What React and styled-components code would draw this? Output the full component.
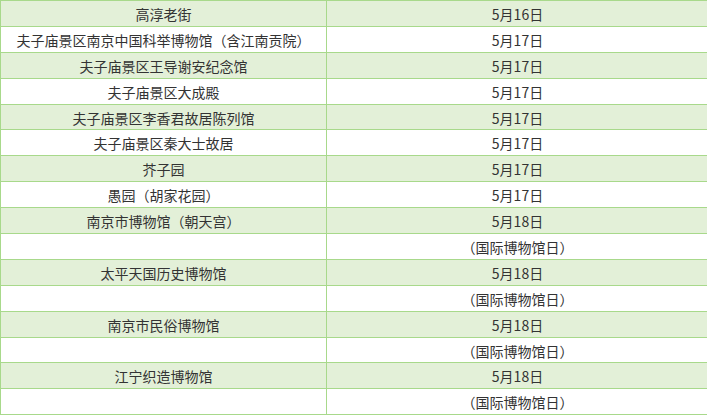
import React from "react";
import styled, { createGlobalStyle } from "styled-components";

const GlobalStyle = createGlobalStyle`
  html, body {
    margin: 0;
    padding: 0;
    background: #ffffff;
    overflow: hidden;
  }
  body {
    font-family: "Noto Sans CJK SC", "Noto Sans", sans-serif;
  }
`;

const Table = styled.div`
  width: 708px;
  display: grid;
  grid-template-columns: 326px 382px;
  grid-auto-rows: 25.9px;
  border-top: 1px solid #a8d98b;
  border-left: 1px solid #a8d98b;
  box-sizing: border-box;
`;

const Cell = styled.div`
  display: flex;
  align-items: center;
  justify-content: center;
  box-sizing: border-box;
  border-right: 1px solid #a8d98b;
  border-bottom: 1px solid #a8d98b;
  background: ${(p) => (p.$shaded ? "#e3f0d8" : "#ffffff")};
  color: #333333;
  font-size: 14px;
  line-height: 1;
  white-space: nowrap;
  padding-top: 1px;
`;

const rows = [
  ["高淳老街", "5月16日"],
  ["夫子庙景区南京中国科举博物馆（含江南贡院）", "5月17日"],
  ["夫子庙景区王导谢安纪念馆", "5月17日"],
  ["夫子庙景区大成殿", "5月17日"],
  ["夫子庙景区李香君故居陈列馆", "5月17日"],
  ["夫子庙景区秦大士故居", "5月17日"],
  ["芥子园", "5月17日"],
  ["愚园（胡家花园）", "5月17日"],
  ["南京市博物馆（朝天宫）", "5月18日"],
  ["", "（国际博物馆日）"],
  ["太平天国历史博物馆", "5月18日"],
  ["", "（国际博物馆日）"],
  ["南京市民俗博物馆", "5月18日"],
  ["", "（国际博物馆日）"],
  ["江宁织造博物馆", "5月18日"],
  ["", "（国际博物馆日）"],
];

export default function App() {
  return (
    <>
      <GlobalStyle />
      <Table>
        {rows.map(([place, date], i) => (
          <React.Fragment key={i}>
            <Cell $shaded={i % 2 === 0}>{place}</Cell>
            <Cell $shaded={i % 2 === 0}>{date}</Cell>
          </React.Fragment>
        ))}
      </Table>
    </>
  );
}
